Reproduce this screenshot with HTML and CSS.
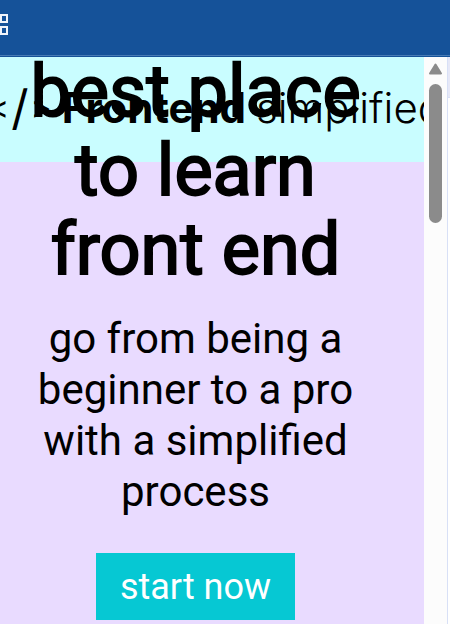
FILE: index.html
```html
<!DOCTYPE html>
<html lang="en">
<head>
<meta charset="utf-8">
<meta name="viewport" content="width=device-width, initial-scale=1">
<title>Frontend Simplified</title>
<link rel="stylesheet" href="styles.css">
</head>
<body>
<header class="toolbar">
  <svg class="grid-icon" viewBox="0 0 18 22" aria-hidden="true">
    <rect x="1" y="1" width="6" height="7"/>
    <rect x="11" y="1" width="6" height="7"/>
    <rect x="1" y="13" width="6" height="7"/>
    <rect x="11" y="13" width="6" height="7"/>
  </svg>
</header>
<div class="window">
  <main class="page">
    <nav class="nav">
      <a class="logo" href="#"><span class="logo-mark"><span>&lt;</span><span class="slash">/</span><span>&gt;</span></span><strong>Frontend</strong><span>simplified</span></a>
    </nav>
    <section class="hero">
      <h1>best place to learn front end</h1>
      <p>go from being a beginner to a pro with a simplified process</p>
      <button type="button">start now</button>
    </section>
  </main>
  <div class="scrollbar">
    <svg class="arrow" viewBox="0 0 15 12" aria-hidden="true"><path d="M7.500 1.500 13 10.500H2Z"/></svg>
    <div class="thumb"></div>
  </div>
  <aside class="panel"><div class="panel-head"></div></aside>
</div>
</body>
</html>
```
FILE: styles.css
```css
* { box-sizing: border-box; }
body {
  margin: 0;
  height: 100vh;
  display: flex;
  flex-direction: column;
  overflow: hidden;
  font-family: Roboto, sans-serif;
  color: #000;
}
.toolbar {
  flex: none;
  height: 57px;
  padding-top: 14px;
  background: #155299;
  border-bottom: 1px solid #155299;
  box-shadow: inset 0 -1px #487bb5;
}
.grid-icon {
  display: block;
  width: 18px;
  height: 22px;
  margin-left: -10px;
  fill: none;
  stroke: #f0f4fa;
  stroke-width: 2;
}
.window { flex: 1; min-height: 0; display: flex; }
.page {
  flex: 1;
  min-width: 0;
  display: grid;
  grid-template: auto / 100%;
  overflow: hidden;
  background: #e9dbff;
}
.nav, .hero { grid-area: 1 / 1; }
.nav {
  height: 105px;
  padding-bottom: 4px;
  display: flex;
  align-items: center;
  background: #c9fdff;
}
.logo {
  display: flex;
  align-items: center;
  gap: 10px;
  margin-left: -12px;
  color: inherit;
  font: 300 42px/48px Inter, sans-serif;
  text-decoration: none;
  white-space: nowrap;
}
.logo strong { font-weight: 700; }
.logo-mark { display: flex; align-items: center; gap: 2px; font-size: 32px; font-weight: 400; }
.slash { font-size: 48px; }
.hero {
  display: flex;
  flex-direction: column;
  align-items: center;
  padding: 0 62px 0 29px;
  text-align: center;
}
h1 {
  margin: -5px 0 24px;
  font-size: 72px;
  line-height: 79px;
  font-weight: 400;
  -webkit-text-stroke: 2px #000;
}
p {
  margin: 0 0 36px;
  font-size: 42px;
  line-height: 51px;
}
button {
  height: 67px;
  padding: 0 24px;
  border: 0;
  background: #06c8d3;
  color: #fff;
  font: 36px/48px Roboto, sans-serif;
}
.scrollbar {
  flex: none;
  width: 23px;
  display: flex;
  flex-direction: column;
  align-items: center;
  gap: 9px;
  padding-top: 6px;
  background: #fcfcfc;
}
.arrow { width: 15px; height: 12px; }
.arrow path { fill: #8b8b8b; stroke: #8b8b8b; stroke-width: 2; stroke-linejoin: round; }
.thumb { width: 13px; height: 139px; border-radius: 7px; background: #8b8b8b; }
.panel { flex: none; width: 3px; border-left: 1px solid #d8e0f6; background: #fff; }
.panel-head { height: 41px; background: #e6e8f7; border-bottom: 1px solid #d8e0f6; }
```
